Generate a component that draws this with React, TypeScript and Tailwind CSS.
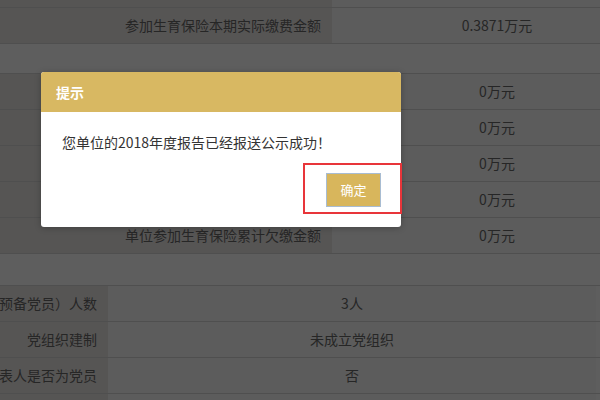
import React from 'react';

type Row = { label: string; value: string };

const topRows: Row[] = [
  { label: '参加生育保险本期应缴费金额', value: '0.3871万元' },
  { label: '参加生育保险本期实际缴费金额', value: '0.3871万元' },
];

const midRows: Row[] = [
  { label: '单位参加养老保险累计欠缴金额', value: '0万元' },
  { label: '单位参加失业保险累计欠缴金额', value: '0万元' },
  { label: '单位参加医疗保险累计欠缴金额', value: '0万元' },
  { label: '单位参加工伤保险累计欠缴金额', value: '0万元' },
  { label: '单位参加生育保险累计欠缴金额', value: '0万元' },
];

const partyRows: Row[] = [
  { label: '中共党员（包括预备党员）人数', value: '3人' },
  { label: '党组织建制', value: '未成立党组织' },
  { label: '法定代表人是否为党员', value: '否' },
  { label: '', value: '' },
];

function InfoTable({ rows, labelWidth, valueWidth }: { rows: Row[]; labelWidth: string; valueWidth: string }) {
  return (
    <div className="flex flex-col">
      {rows.map((r, i) => (
        <div key={i} className="flex h-[36px] border-t border-[#4f4f4f] shrink-0">
          <div className={`${labelWidth} shrink-0 flex items-center justify-end pr-[11px] bg-[#565554] overflow-hidden`}>
            <span className="whitespace-nowrap">{r.label}</span>
          </div>
          <div className={`${valueWidth} shrink-0 flex items-center justify-center bg-[#5c5c5c]`}>
            <span className="whitespace-nowrap">{r.value}</span>
          </div>
        </div>
      ))}
    </div>
  );
}

export default function App() {
  return (
    <div
      className="relative w-[600px] h-[400px] overflow-hidden bg-[#5e5e5e] text-[14px] text-[#262626]"
      style={{ fontFamily: '"Noto Sans CJK SC", "Microsoft YaHei", sans-serif' }}
    >
      {/* page behind the mask */}
      <div className="-mt-[29px]">
        <InfoTable rows={topRows} labelWidth="w-[332px]" valueWidth="w-[330px]" />
      </div>
      <div className="h-[30px] border-t border-[#4f4f4f]" />
      <InfoTable rows={midRows} labelWidth="w-[332px]" valueWidth="w-[330px]" />
      <div className="h-[32px] border-t border-[#4f4f4f]" />
      <InfoTable rows={partyRows} labelWidth="w-[108px]" valueWidth="w-[488px]" />

      {/* dialog */}
      <div className="absolute left-[41px] top-[72px] w-[360px] h-[155px] bg-white rounded-[3px] overflow-hidden shadow-[0_1px_6px_rgba(0,0,0,0.25)] flex flex-col">
        <div className="h-[40px] bg-[#d8b862] flex items-center pl-[15px] text-white text-[14px] font-bold">
          提示
        </div>
        <div className="flex-1 flex flex-col px-[20px]">
          <p className="pt-[20px] pl-[1px] text-[14px] leading-[20px] text-[#333]">
            您单位的2018年度报告已经报送公示成功！
          </p>
          <div className="flex justify-end mt-[21px]">
            <button className="w-[55px] h-[34px] bg-[#d8b65c] border border-[#a8bcd2] text-white text-[13px]">
              确定
            </button>
          </div>
        </div>
      </div>

      {/* highlight annotation */}
      <div className="absolute left-[303px] top-[163px] w-[99px] h-[51px] border-2 border-[#e8353a]" />
    </div>
  );
}
